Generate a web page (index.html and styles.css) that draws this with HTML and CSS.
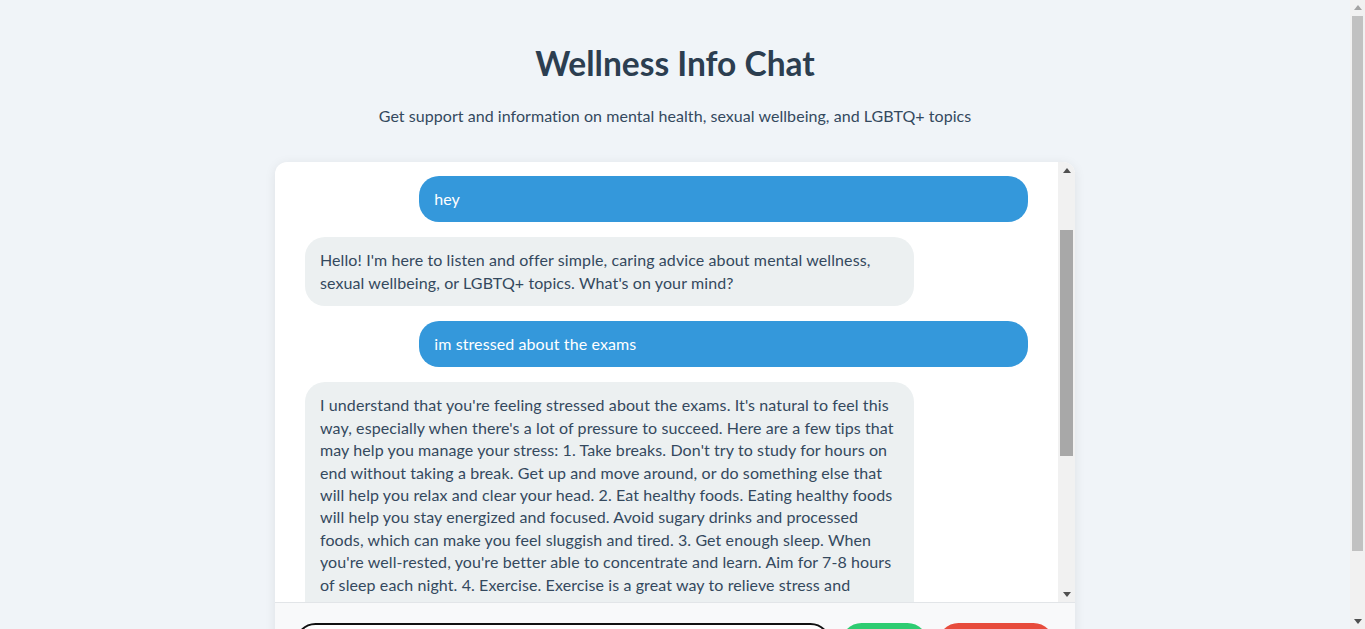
FILE: index.html
```html
<!DOCTYPE html>
<html lang="en">
<head>
<meta charset="utf-8">
<title>Wellness Info Chat</title>
<link rel="stylesheet" href="styles.css">
</head>
<body>
  <div class="page">
    <header class="header">
      <h1 class="title">Wellness Info Chat</h1>
      <p class="subtitle">Get support and information on mental health, sexual wellbeing, and LGBTQ+ topics</p>
    </header>
    <main class="chat">
      <div class="chat-body">
        <div class="messages" id="messages">
          <div class="msg bot">Hi there! I'm here to offer information and support on mental health, sexual wellbeing, and LGBTQ+ topics. How can I help you today?</div>
          <div class="msg user" id="first-user">hey</div>
          <div class="msg bot">Hello! I'm here to listen and offer simple, caring advice about mental wellness, sexual wellbeing, or LGBTQ+ topics. What's on your mind?</div>
          <div class="msg user">im stressed about the exams</div>
          <div class="msg bot">I understand that you're feeling stressed about the exams. It's natural to feel this way, especially when there's a lot of pressure to succeed. Here are a few tips that may help you manage your stress: 1. Take breaks. Don't try to study for hours on end without taking a break. Get up and move around, or do something else that will help you relax and clear your head. 2. Eat healthy foods. Eating healthy foods will help you stay energized and focused. Avoid sugary drinks and processed foods, which can make you feel sluggish and tired. 3. Get enough sleep. When you're well-rested, you're better able to concentrate and learn. Aim for 7-8 hours of sleep each night. 4. Exercise. Exercise is a great way to relieve stress and improve your mood. Even a short walk outside can make a big difference to how you feel. 5. Talk to someone. Sharing your worries with a friend, family member, or counselor can help you feel less alone. 6. Practice relaxation techniques. Deep breathing, meditation, or gentle stretching can help calm your mind and body. 7. Stay organized. Make a study schedule and break your work into smaller, manageable tasks. Remember, it's okay to ask for help if you're feeling overwhelmed. Your wellbeing matters more than any exam grade. Is there anything specific about the exams that's worrying you?</div>
        </div>
        <div class="scrollbar chat-scrollbar" aria-hidden="true">
          <div class="sb-btn">
            <svg width="8" height="5" viewBox="0 0 8 5"><path d="M0 5L4 0L8 5Z" fill="#505050"/></svg>
          </div>
          <div class="sb-track"><div class="sb-thumb chat-thumb"></div></div>
          <div class="sb-btn">
            <svg width="8" height="5" viewBox="0 0 8 5"><path d="M0 0L8 0L4 5Z" fill="#505050"/></svg>
          </div>
        </div>
      </div>
      <form class="composer">
        <input class="composer-input" type="text" placeholder="Type your message...">
        <button class="btn btn-send" type="button">Send</button>
        <button class="btn btn-end" type="button">End Chat</button>
      </form>
    </main>
  </div>
  <div class="scrollbar page-scrollbar" aria-hidden="true">
    <div class="sb-btn page-btn">
      <svg width="8" height="5" viewBox="0 0 8 5"><path d="M0 5L4 0L8 5Z" fill="#a3a3a3"/></svg>
    </div>
    <div class="sb-track"><div class="sb-thumb page-thumb"></div></div>
    <div class="sb-btn page-btn">
      <svg width="8" height="5" viewBox="0 0 8 5"><path d="M0 0L8 0L4 5Z" fill="#505050"/></svg>
    </div>
  </div>
  <script src="script.js"></script>
</body>
</html>
```

FILE: styles.css
```css
* {
  box-sizing: border-box;
}

html, body {
  margin: 0;
}

body {
  display: flex;
  align-items: flex-start;
  background: #f0f4f8;
  font-family: "Lato", "Open Sans", sans-serif;
  color: #2c3e50;
}

.page {
  flex: 1;
  min-width: 0;
  padding: 20px 20px 13px;
}

/* drawn scrollbars (classic style) */
.scrollbar {
  display: flex;
  flex-direction: column;
  background: #f1f1f1;
  flex-shrink: 0;
}

.sb-btn {
  height: 16px;
  display: flex;
  align-items: center;
  justify-content: center;
  flex-shrink: 0;
}

.sb-btn svg {
  display: block;
}

.sb-track {
  flex: 1;
  padding: 0 2px;
}

.sb-thumb {
  width: 100%;
}

.page-scrollbar {
  width: 15px;
  height: 100vh;
  position: sticky;
  top: 0;
}

.page-btn {
  height: 15px;
}

.page-thumb {
  margin-top: 1px;
  height: 535px;
  background: #c1c1c1;
}

.chat-scrollbar {
  width: 17px;
}

.chat-thumb {
  margin-top: 52px;
  height: 226px;
  background: #a8a8a8;
}

.header {
  text-align: center;
  padding-top: 23px;
}

.title {
  margin: 0;
  font-size: 33.5px;
  line-height: 40px;
  font-weight: 700;
  color: #2c3e50;
}

.subtitle {
  margin: 22px 0 0;
  font-size: 16px;
  line-height: 22px;
  letter-spacing: 0.05px;
  color: #34495e;
}

.chat {
  width: 800px;
  margin: 35px auto 0;
  background: #ffffff;
  border-radius: 12px;
  box-shadow: 0 2px 12px rgba(0, 0, 0, 0.08);
  overflow: hidden;
}

.chat-body {
  display: flex;
  height: 440px;
}

.messages {
  flex: 1;
  min-width: 0;
  overflow-y: auto;
  scrollbar-width: none;
  padding: 20px 30px;
  display: flex;
  flex-direction: column;
  gap: 15px;
}

.messages::-webkit-scrollbar {
  display: none;
}

.msg {
  width: 84.2%;
  padding: 12px 15px;
  border-radius: 20px;
  font-size: 16px;
  line-height: 22.4px;
  letter-spacing: 0.1px;
  flex-shrink: 0;
}

.user {
  align-self: flex-end;
  background: #3498db;
  color: #ffffff;
}

.bot {
  align-self: flex-start;
  background: #ecf0f1;
  color: #34495e;
}

.composer {
  margin: 0;
  display: flex;
  gap: 10px;
  padding: 20px 21px 20px 20px;
  background: #f8f9fa;
  border-top: 1px solid #e2e5e8;
}

.composer-input {
  flex: 1;
  padding: 9px 15px;
  font-family: inherit;
  font-size: 16px;
  border: 2px solid #111111;
  border-radius: 22px;
  outline: none;
  background: #ffffff;
}

.btn {
  border: none;
  border-radius: 22px;
  padding: 10px 26px;
  font-family: inherit;
  font-size: 16px;
  color: #ffffff;
  cursor: pointer;
}

.btn-send {
  background: #2ecc71;
}

.btn-end {
  background: #e74c3c;
}
```

FILE: script.js
```js
var list = document.getElementById('messages');
var first = document.getElementById('first-user');
list.scrollTop = first.offsetTop - list.offsetTop - 14;
```
